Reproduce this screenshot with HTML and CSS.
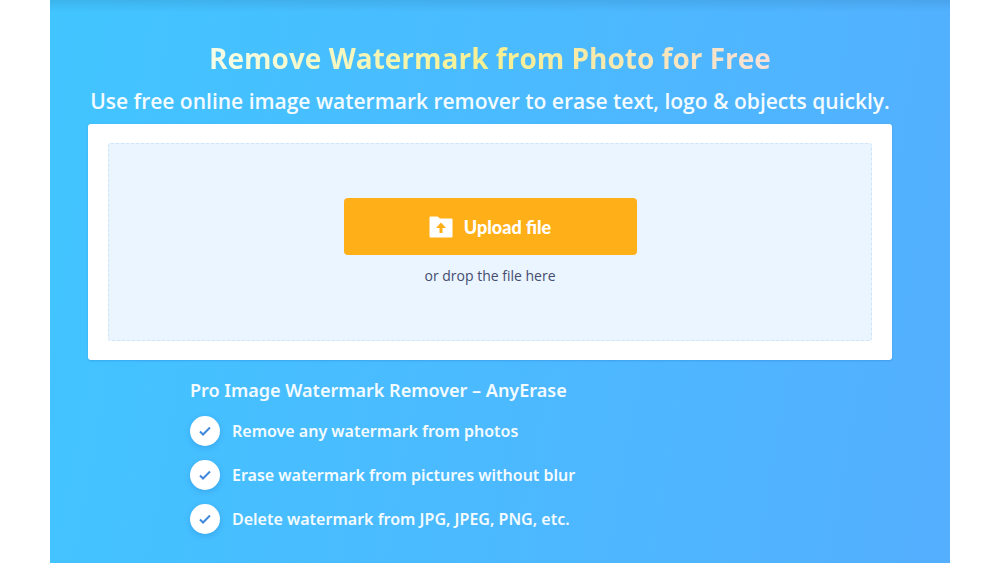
FILE: index.html
```html
<!DOCTYPE html>
<html lang="en">
<head>
  <meta charset="UTF-8">
  <meta name="viewport" content="width=device-width, initial-scale=1.0">
  <title>Remove Watermark from Photo for Free</title>
  <link rel="stylesheet" href="styles.css">
</head>
<body>
  <main class="hero">
    <h1>Remove Watermark from Photo for Free</h1>
    <p class="subtitle">Use free online image watermark remover to erase text, logo &amp; objects quickly.</p>

    <!-- upload box -->
    <div class="upload-card">
      <div class="drop-zone">
        <button type="button" class="upload-btn">
          <svg class="upload-icon" viewBox="0 0 24 22" aria-hidden="true">
            <path fill="#fff" d="M1.5 0.5h7l2.5 2h11.500a1 1 0 0 1 1 1v17a1 1 0 0 1-1 1H1.500a1 1 0 0 1-1-1v-19a1 1 0 0 1 1-1z"/>
            <path fill="#ffaf18" d="M12 6.500l5 5.500h-3.500v5h-3v-5H7z"/>
          </svg>
          Upload file
        </button>
        <p class="drop-text">or drop the file here</p>
      </div>
    </div>

    <!-- features -->
    <section class="features">
      <h2>Pro Image Watermark Remover – AnyErase</h2>
      <ul>
        <li>
          <span class="check"><svg viewBox="0 0 12 10" aria-hidden="true"><path d="M1 5.500l3 3L11 1.500"/></svg></span>
          Remove any watermark from photos
        </li>
        <li>
          <span class="check"><svg viewBox="0 0 12 10" aria-hidden="true"><path d="M1 5.500l3 3L11 1.500"/></svg></span>
          Erase watermark from pictures without blur
        </li>
        <li>
          <span class="check"><svg viewBox="0 0 12 10" aria-hidden="true"><path d="M1 5.500l3 3L11 1.500"/></svg></span>
          Delete watermark from JPG, JPEG, PNG, etc.
        </li>
      </ul>
    </section>
  </main>
</body>
</html>
```

FILE: styles.css
```css
* {
  box-sizing: border-box;
}
body {
  margin: 0;
  background: #fff;
  font-family: "Segoe UI", "Open Sans", "Noto Sans", sans-serif;
}
h1, h2, p, ul {
  margin: 0;
  padding: 0;
}
.hero {
  display: flex;
  flex-direction: column;
  align-items: center;
  width: 90%;
  min-height: 100vh;
  margin: 0 auto;
  padding: 38px 58px 24px 38px;
  color: #f4fbff;
  background:
    linear-gradient(rgba(40, 110, 160, 0.2), rgba(40, 110, 160, 0) 12px),
    linear-gradient(100deg, #41c5ff, #4bbaff 50%, #54afff);
}
h1 {
  font-size: 28px;
  line-height: 40px;
  font-weight: 700;
  color: transparent;
  background: linear-gradient(90deg, #f4fde8, #f6f090 50%, #f8e0d8);
  background-clip: text;
  -webkit-background-clip: text;
}
.subtitle {
  margin: 8px 0;
  font-size: 21px;
  line-height: 30px;
  font-weight: 600;
  text-align: center;
}
.upload-card {
  width: 100%;
  padding: 19px 20px;
  border-radius: 3px;
  background: #fff;
  box-shadow: 0 1px 2px rgba(30, 110, 190, 0.3);
}
.drop-zone {
  display: flex;
  flex-direction: column;
  align-items: center;
  padding: 54px 20px;
  border: 1px dashed #cfe4f8;
  border-radius: 3px;
  background: #eaf5ff;
}
.upload-btn {
  display: flex;
  align-items: center;
  justify-content: center;
  gap: 11px;
  width: 293px;
  height: 57px;
  border: none;
  border-radius: 4px;
  background: #ffaf18;
  color: #fff;
  font-family: Lato, sans-serif;
  font-size: 18px;
  font-weight: 900;
  cursor: pointer;
}
.upload-icon {
  width: 24px;
  height: 22px;
}
.drop-text {
  margin-top: 11px;
  font-size: 14px;
  line-height: 20px;
  color: #454c70;
}
.features {
  align-self: flex-start;
  margin: 16px 0 0 102px;
  font-family: "Segoe UI", "Noto Sans", sans-serif;
}
h2 {
  font-size: 18px;
  line-height: 28px;
  font-weight: 600;
}
ul {
  display: grid;
  gap: 14px;
  margin-top: 12px;
  list-style: none;
}
li {
  display: flex;
  align-items: center;
  gap: 12px;
  font-size: 16px;
  line-height: 24px;
  font-weight: 600;
}
.check {
  display: flex;
  align-items: center;
  justify-content: center;
  width: 30px;
  height: 30px;
  border-radius: 50%;
  background: #fff;
  box-shadow: 0 2px 6px rgba(30, 110, 200, 0.3);
}
.check svg {
  width: 12px;
  height: 10px;
  fill: none;
  stroke: #4088dc;
  stroke-width: 2;
}
```
